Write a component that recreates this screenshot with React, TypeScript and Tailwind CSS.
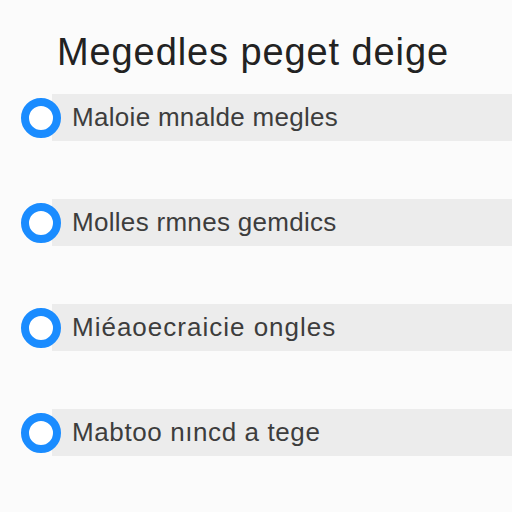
const items = [
  { label: "Maloie mnalde megles", track: "tracking-[0.3px]" },
  { label: "Molles rmnes gemdics", track: "tracking-[0.3px]" },
  { label: "Miéaoecraicie ongles", track: "tracking-[1px]" },
  { label: "Mabtoo nıncd a tege", track: "tracking-[0.6px]" },
];

export default function App() {
  return (
    <div className="w-[512px] h-[512px] bg-[#fbfbfb] overflow-hidden font-['Liberation_Sans',Arial,sans-serif]">
      <h1 className="pt-[29px] pl-[57px] text-[38px] leading-[46px] text-[#222222] tracking-[0.9px]">
        Megedles peget deige
      </h1>
      <ul className="mt-[19px] flex flex-col gap-[58px]">
        {items.map((item) => (
          <li key={item.label} className="relative flex h-[47px] items-center">
            <div className="ml-[52px] flex h-full flex-1 items-center bg-[#ececec] pl-[20px]">
              <span className={`text-[26px] text-[#3d3d3d] ${item.track}`}>{item.label}</span>
            </div>
            <span className="absolute left-[21px] top-[4px] h-[40px] w-[40px] rounded-full border-[8px] border-[#1a8cff] bg-white" />
          </li>
        ))}
      </ul>
    </div>
  );
}
